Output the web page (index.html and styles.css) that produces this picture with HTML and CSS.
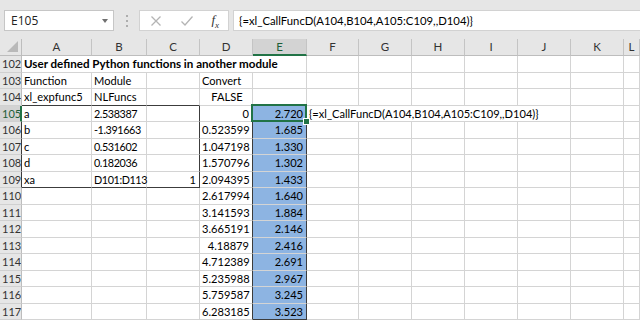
FILE: index.html
```html
<!DOCTYPE html>
<html lang="en">
<head>
    <meta charset="UTF-8">
    <title>Book1 - Excel</title>
    <link rel="stylesheet" href="styles.css">
</head>
<body>
    <div class="toolbar">
        <div class="namebox"><span>E105</span><span class="caret"></span></div>
        <svg class="grip" width="4" height="14" viewBox="0 0 4 14">
            <circle cx="2" cy="2" r="1" fill="#9a9a9a"/>
            <circle cx="2" cy="7" r="1" fill="#9a9a9a"/>
            <circle cx="2" cy="12" r="1" fill="#9a9a9a"/>
        </svg>
        <div class="fxbuttons">
            <svg width="12" height="12" viewBox="0 0 12 12"><path d="M1.5 1.5 L10.5 10.5 M10.5 1.5 L1.5 10.5" stroke="#b4b4b4" stroke-width="1.3" fill="none"/></svg>
            <svg width="14" height="12" viewBox="0 0 14 12"><path d="M1.5 6.5 L5 10 L12.5 1.5" stroke="#b4b4b4" stroke-width="1.3" fill="none"/></svg>
            <span class="fx">f<sub>x</sub></span>
        </div>
        <div class="formula">{=xl_CallFuncD(A104,B104,A105:C109,,D104)}</div>
    </div>
    <div class="sheet" id="sheet"></div>

    <script>
        const cols = ['A', 'B', 'C', 'D', 'E', 'F', 'G', 'H', 'I', 'J', 'K', 'L'];
        const sheet = document.getElementById('sheet');

        // row -> list of [column, text, class, span]
        const data = {
            102: [['A', 'User defined Python functions in another module', 'title', 5]],
            103: [['A', 'Function'], ['B', 'Module'], ['D', 'Convert']],
            104: [['A', 'xl_expfunc5'], ['B', 'NLFuncs'], ['D', 'FALSE', 'center']],
            105: [['A', 'a'], ['B', '2.538387', 'tight'], ['D', '0', 'num'], ['E', '2.720', 'num'],
                  ['F', '{=xl_CallFuncD(A104,B104,A105:C109,,D104)}', '', 5]],
            106: [['A', 'b'], ['B', '-1.391663', 'tight'], ['D', '0.523599', 'num'], ['E', '1.685', 'num']],
            107: [['A', 'c'], ['B', '0.531602', 'tight'], ['D', '1.047198', 'num'], ['E', '1.330', 'num']],
            108: [['A', 'd'], ['B', '0.182036', 'tight'], ['D', '1.570796', 'num'], ['E', '1.302', 'num']],
            109: [['A', 'xa'], ['B', 'D101:D113', 'tight'], ['C', '1', 'num'], ['D', '2.094395', 'num'], ['E', '1.433', 'num']],
            110: [['D', '2.617994', 'num'], ['E', '1.640', 'num']],
            111: [['D', '3.141593', 'num'], ['E', '1.884', 'num']],
            112: [['D', '3.665191', 'num'], ['E', '2.146', 'num']],
            113: [['D', '4.18879', 'num'], ['E', '2.416', 'num']],
            114: [['D', '4.712389', 'num'], ['E', '2.691', 'num']],
            115: [['D', '5.235988', 'num'], ['E', '2.967', 'num']],
            116: [['D', '5.759587', 'num'], ['E', '3.245', 'num']],
            117: [['D', '6.283185', 'num'], ['E', '3.523', 'num']]
        };

        function addCell(text, cls) {
            const div = document.createElement('div');
            div.className = cls;
            div.textContent = text || '';
            sheet.appendChild(div);
            return div;
        }

        addCell('', 'corner');
        cols.forEach(c => addCell(c, 'colhead' + (c === 'E' ? ' active' : '')));

        for (let r = 102; r <= 117; r++) {
            let head = 'rowhead';
            if (r === 105) head += ' active';
            if (r >= 106 && r <= 109) head += ' edge-r';
            addCell(r, head);

            const entries = data[r] || [];
            for (let i = 0; i < cols.length; i++) {
                const c = cols[i];
                const entry = entries.find(e => e[0] === c) || [c, ''];
                let cls = 'cell';
                if (entry[2]) cls += ' ' + entry[2];
                if ((r === 104 || r === 109) && 'ABC'.includes(c)) cls += ' edge-b';
                if ((r === 104 || r === 117) && c === 'E') cls += ' edge-b';
                if (r >= 105 && r <= 109 && c === 'C') cls += ' edge-r';
                if (r >= 105 && (c === 'D' || c === 'E')) cls += ' edge-r';
                if (r >= 105 && c === 'E') cls += ' fill';
                if (r === 105 && c === 'E') cls += ' current';
                const div = addCell(entry[1], cls);
                if (entry[3]) {
                    div.style.gridColumn = 'span ' + entry[3];
                    i += entry[3] - 1;
                }
            }
        }
    </script>
</body>
</html>
```

FILE: styles.css
```css
body { margin: 0; background: #fff; font-family: Lato, "Liberation Sans", sans-serif; font-size: 11.1px; color: #000; overflow: hidden; }

.toolbar { height: 39px; box-sizing: border-box; padding-top: 10px; background: #e6e6e6; display: flex; align-items: flex-start; }
.namebox { margin-left: 4px; width: 110px; height: 21px; box-sizing: border-box; border: 1px solid #c6c6c6; background: #fff; display: flex; align-items: center; justify-content: space-between; padding: 0 5px 0 6px; font-family: "Open Sans", sans-serif; font-size: 12px; color: #222; }
.caret { border-left: 3.5px solid transparent; border-right: 3.5px solid transparent; border-top: 4px solid #707070; }
.grip { margin: 4px 10px 0 11px; }
.fxbuttons { width: 90px; height: 21px; box-sizing: border-box; border: 1px solid #d2d2d2; background: #fff; display: flex; align-items: center; justify-content: space-between; padding: 0 9px 0 10px; }
.fx { font-family: "Liberation Serif", serif; font-style: italic; font-size: 13px; color: #333; }
.fx sub { font-size: 9px; }
.formula { flex: 1; margin-left: 4px; height: 21px; box-sizing: border-box; border: 1px solid #d2d2d2; border-right: none; background: #fff; padding: 0 0 0 5px; line-height: 19px; font-size: 11.3px; white-space: nowrap; }

.sheet { display: grid; grid-template-columns: 22px 70px 55px 53px 53px 54px 52px 53px 53px 53px 53px 53px 16px; grid-template-rows: 17px repeat(16, 16.5px); }
.corner, .colhead, .rowhead, .cell { box-sizing: border-box; border-right: 1px solid #d4d4d4; border-bottom: 1px solid #d4d4d4; white-space: nowrap; overflow: hidden; }

.corner { background: #e6e6e6; border-color: #bdbdbd; position: relative; }
.corner::after { content: ''; position: absolute; right: 3px; bottom: 3px; border-left: 11px solid transparent; border-bottom: 11px solid #b9b9b9; }
.colhead { background: #e6e6e6; border-right-color: #c4c4c4; border-bottom-color: #bdbdbd; text-align: center; line-height: 16px; color: #333; font-size: 11.5px; }
.colhead.active { background: #d3d3d3; border-bottom: 2px solid #217346; color: #1e5e38; }
.rowhead { background: #e6e6e6; border-right-color: #bdbdbd; border-bottom-color: #d0d0d0; padding-left: 2px; line-height: 16px; color: #333; font-size: 11px; }
.rowhead.active { background: #d3d3d3; border-right: 2px solid #217346; color: #1e5e38; }

.cell { padding: 0 0 0 2px; line-height: 16px; }
.cell.title { font-weight: bold; font-size: 11.6px; }
.cell.tight { letter-spacing: -0.4px; font-size: 10.8px; overflow: visible; }
.cell.num { text-align: right; padding-right: 3px; }
.cell.center { text-align: center; }
.cell.fill { background: #8db4e2; }
.edge-b { border-bottom-color: #3c3c3c; }
.edge-r { border-right-color: #3c3c3c; }
.cell.current { position: relative; overflow: visible; z-index: 2; }
.cell.current::after { content: ''; position: absolute; left: -2px; top: -2px; right: -1px; bottom: -1px; border: 2px solid #217346; }
.cell.current::before { content: ''; position: absolute; right: -4px; bottom: -4px; width: 5px; height: 5px; background: #217346; border: 1px solid #fff; z-index: 3; }
```
